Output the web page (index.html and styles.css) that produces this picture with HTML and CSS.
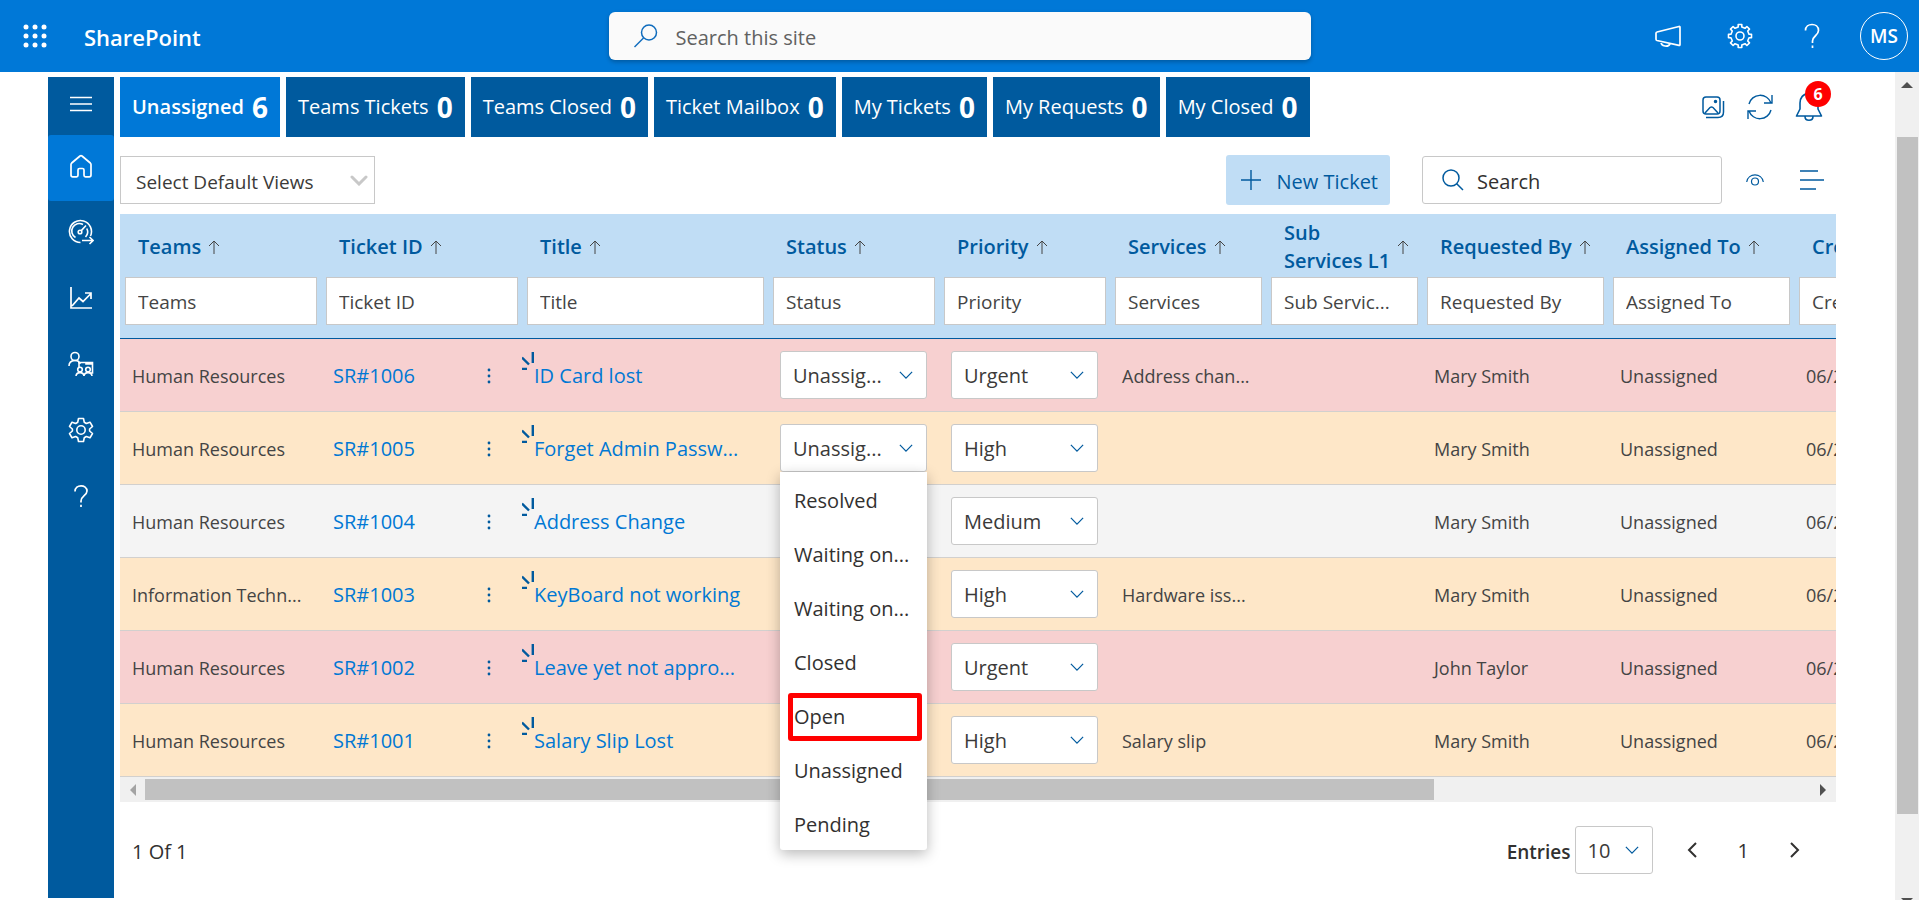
FILE: index.html
```
<!DOCTYPE html>
<html lang="en">
<head>
<meta charset="utf-8">
<title>SharePoint - Tickets</title>
<link rel="stylesheet" href="styles.css">
</head>
<body>
<svg class="defs" width="0" height="0" aria-hidden="true">
  <symbol id="i-up" viewBox="0 0 12 14"><path d="M6 14V1M1 6l5-5 5 5" fill="none" stroke="currentColor"/></symbol>
  <symbol id="i-down" viewBox="0 0 16 9"><path d="M1 1l7 7 7-7" fill="none" stroke="currentColor" stroke-width="1.4"/></symbol>
  <symbol id="i-dots" viewBox="0 0 4 16"><circle cx="2" cy="2" r="1.4"/><circle cx="2" cy="8" r="1.4"/><circle cx="2" cy="14" r="1.4"/></symbol>
  <symbol id="i-new" viewBox="0 0 12 18"><path d="M10.800 0V11M0 5.500L7 12.500M0 17h5" fill="none" stroke="currentColor" stroke-width="2.400"/></symbol>
  <symbol id="i-search" viewBox="0 0 24 24"><circle cx="10" cy="10" r="8" fill="none" stroke="currentColor" stroke-width="1.5"/><path d="M15.700 15.700L22 22" stroke="currentColor" stroke-width="1.500"/></symbol>
</svg>

<header class="suite">
  <button class="suite-btn waffle" aria-label="App launcher">
    <svg width="24" height="24" viewBox="0 0 24 24" fill="currentColor"><circle cx="3" cy="3" r="2.500"/><circle cx="12" cy="3" r="2.500"/><circle cx="21" cy="3" r="2.500"/><circle cx="3" cy="12" r="2.500"/><circle cx="12" cy="12" r="2.500"/><circle cx="21" cy="12" r="2.500"/><circle cx="3" cy="21" r="2.500"/><circle cx="12" cy="21" r="2.500"/><circle cx="21" cy="21" r="2.500"/></svg>
  </button>
  <a class="brand" href="#">SharePoint</a>
  <label class="suite-search">
    <svg width="26" height="26" viewBox="0 0 26 26" fill="none" stroke="currentColor" stroke-width="1.500"><circle cx="16" cy="9.500" r="7.500"/><path d="M10.500 15L1.500 24"/></svg>
    <input type="text" placeholder="Search this site" aria-label="Search this site">
  </label>
  <div class="suite-actions">
    <button class="suite-btn" aria-label="Announcements"><svg width="28" height="24" viewBox="0 0 28 24" fill="none" stroke="currentColor" stroke-width="1.700" stroke-linejoin="round"><path d="M3 8L25 2.500Q26 2.300 26 3.500V20.500Q26 21.700 25 21.400L3 16.500Q2 16.200 2 15.200V9.200Q2 8.200 3 8ZM7 17.800c0 5 7.500 5.500 9 2"/></svg></button>
    <button class="suite-btn" aria-label="Settings"><svg width="26" height="26" viewBox="0 0 26 26" fill="none" stroke="currentColor" stroke-width="1.600" stroke-linejoin="round"><circle cx="13" cy="13" r="4"/><path d="M11.200 4V1.500H14.800V4L18 5.300L19.900 3.500L22.500 6.100L20.700 8L22 11.200H24.500V14.800H22L20.700 18L22.500 19.900L19.900 22.500L18 20.700L14.800 22V24.500H11.200V22L8 20.700L6.100 22.500L3.500 19.900L5.300 18L4 14.800H1.500V11.200H4L5.300 8L3.500 6.100L6.100 3.500L8 5.300Z"/></svg></button>
    <button class="suite-btn" aria-label="Help"><svg width="18" height="26" viewBox="0 0 18 26" fill="none" stroke="currentColor" stroke-width="1.700"><path d="M2.500 7.500C2.500 -0.500 15.500 -0.500 15.500 7.500C15.500 12.500 9.500 13 9.500 18V20M9.500 22.500V25"/></svg></button>
    <button class="avatar">MS</button>
  </div>
</header>

<div class="shell">
  <div class="app">
    <nav class="side" aria-label="Main">
      <button class="side-item side-menu" aria-label="Menu"><svg width="22" height="16" viewBox="0 0 22 16" stroke="currentColor" stroke-width="1.500"><path d="M0 1.500H22M0 8H22M0 14.500H22"/></svg></button>
      <a class="side-item active" href="#" aria-label="Home"><svg width="24" height="24" viewBox="0 0 24 24" fill="none" stroke="currentColor" stroke-width="1.700" stroke-linejoin="round"><path d="M2 10.500Q2 9.700 2.700 9L11 2Q12 1.200 13 2L21.300 9Q22 9.700 22 10.500V21Q22 22.800 20.200 22.800H16.500Q15 22.800 15 21.300V16Q15 14.500 13.500 14.500H10.500Q9 14.500 9 16V21.300Q9 22.800 7.500 22.800H3.800Q2 22.800 2 21Z"/></svg></a>
      <a class="side-item" href="#" aria-label="Dashboard"><svg width="26" height="26" viewBox="0 0 26 26" fill="none" stroke="currentColor" stroke-width="1.600"><path d="M12.500 23.500A11 11 0 1 1 22.500 17"/><path d="M7.500 18.500A7.500 7.500 0 0 1 15 5.500M18.800 9.500A7.500 7.500 0 0 1 17.500 18"/><circle cx="12" cy="13" r="1.800"/><path d="M13.300 11.600L18 6.500M14 21.500H25M21.500 18L25 21.500L21.500 25"/></svg></a>
      <a class="side-item" href="#" aria-label="Reports"><svg width="24" height="24" viewBox="0 0 24 24" fill="none" stroke="currentColor" stroke-width="1.700"><path d="M2 1V22H23M3 20L10 12L14 15.500L22 7.500M16 7H22V13"/></svg></a>
      <a class="side-item" href="#" aria-label="Teams"><svg width="26" height="26" viewBox="0 0 26 26" fill="none" stroke="currentColor" stroke-width="1.600"><circle cx="7" cy="5.500" r="4"/><path d="M1 15C1 8 12 8 12 13M10 11.500H24.500V22H22M11 11.500V16M18 11.500V13H24M18 8.500"/><circle cx="12" cy="18.500" r="2.300"/><circle cx="20" cy="18.500" r="2.300"/><path d="M8 25C8.500 20.500 15.500 20.500 16 25C16.500 20.500 23.500 20.500 24 25"/></svg></a>
      <a class="side-item" href="#" aria-label="Settings"><svg width="26" height="26" viewBox="0 0 26 26" fill="none" stroke="currentColor" stroke-width="1.600" stroke-linejoin="round"><circle cx="13" cy="13" r="4.200"/><path d="M10.500 1.500H15.500L16.300 5.300L18.300 6.500L22 5.200L24.500 9.500L21.600 12V14L24.500 16.500L22 20.800L18.300 19.500L16.300 20.700L15.500 24.500H10.500L9.700 20.700L7.700 19.500L4 20.800L1.500 16.500L4.400 14V12L1.500 9.500L4 5.200L7.700 6.500L9.700 5.300Z"/></svg></a>
      <a class="side-item" href="#" aria-label="Help"><svg width="16" height="24" viewBox="0 0 16 24" fill="none" stroke="currentColor" stroke-width="1.700"><path d="M2 7.500C2 0 14 0 14 7C14 11.500 8 12 8 17V18.500M8 20.800V23"/></svg></a>
    </nav>

    <main class="main">
      <div class="top">
        <div class="tabs">
          <button class="tab current">Unassigned <b>6</b></button>
          <button class="tab">Teams Tickets <b>0</b></button>
          <button class="tab">Teams Closed <b>0</b></button>
          <button class="tab">Ticket Mailbox <b>0</b></button>
          <button class="tab">My Tickets <b>0</b></button>
          <button class="tab">My Requests <b>0</b></button>
          <button class="tab">My Closed <b>0</b></button>
        </div>
        <div class="top-icons">
          <button class="icon-btn" aria-label="Gallery"><svg width="24" height="24" viewBox="0 0 24 24" fill="none" stroke="currentColor" stroke-width="1.500"><rect x="2" y="2" width="17" height="17" rx="3"/><path d="M5 22.500H17Q22.500 22.500 22.500 17V6M4 18L9 12.500Q10.500 11.500 12 12.500L17 18"/><circle cx="14.500" cy="6.500" r="1" fill="currentColor"/></svg></button>
          <button class="icon-btn" aria-label="Refresh"><svg width="26" height="26" viewBox="0 0 26 26" fill="none" stroke="currentColor" stroke-width="1.400"><path d="M2 10A11.500 11.500 0 0 1 24 9M25 1V9H17M24 16A11.500 11.500 0 0 1 2 17M1 25V17H9"/></svg></button>
          <button class="icon-btn bell" aria-label="Notifications"><svg width="28" height="30" viewBox="0 0 28 30" fill="none" stroke="currentColor" stroke-width="1.600" stroke-linejoin="round"><path d="M14 1.500C8 1.500 5 6 5 11V17L1.500 24H26.500L23 17V11C23 6 20 1.500 14 1.500ZM10 24.500C10 29.500 18 29.500 18 24.500"/></svg><span class="badge">6</span></button>
        </div>
      </div>

      <div class="toolbar">
        <div class="select views">
          <select aria-label="Default views"><option>Select Default Views</option></select>
          <svg width="18" height="11" viewBox="0 0 18 11"><path d="M2 2l7 7 7-7" fill="none" stroke="currentColor" stroke-width="3" stroke-linecap="round"/></svg>
        </div>
        <div class="tools">
          <button class="new-ticket"><svg width="20" height="20" viewBox="0 0 20 20"><path d="M10 0V20M0 10H20" stroke="currentColor" stroke-width="1.400"/></svg><span>New Ticket</span></button>
          <label class="search"><svg width="24" height="24"><use href="#i-search"/></svg><input type="text" placeholder="Search" aria-label="Search"></label>
          <button class="icon-btn eye" aria-label="Show columns"><svg width="18" height="12" viewBox="0 0 18 12" fill="none" stroke="currentColor" stroke-width="1.200"><path d="M0.700 8C2 -1.500 16 -1.500 17.300 8"/><circle cx="9" cy="7.500" r="3.500"/></svg></button>
          <button class="icon-btn lines" aria-label="Group"><svg width="24" height="20" viewBox="0 0 24 20" stroke="currentColor" stroke-width="1.600"><path d="M0 1H18M0 10H24M0 19H16"/></svg></button>
        </div>
      </div>

      <div class="grid">
        <div class="grid-view">
          <table class="tickets">
            <colgroup><col class="c-team"><col class="c-team"><col class="c-title"><col class="c-pick"><col class="c-pick"><col class="c-serv"><col class="c-serv"><col class="c-who"><col class="c-who"><col class="c-who"></colgroup>
            <thead>
              <tr>
                <th><div class="head">Teams <svg width="12" height="14"><use href="#i-up"/></svg></div><input type="text" placeholder="Teams" aria-label="Filter Teams"></th>
                <th><div class="head">Ticket ID <svg width="12" height="14"><use href="#i-up"/></svg></div><input type="text" placeholder="Ticket ID" aria-label="Filter Ticket ID"></th>
                <th><div class="head">Title <svg width="12" height="14"><use href="#i-up"/></svg></div><input type="text" placeholder="Title" aria-label="Filter Title"></th>
                <th><div class="head">Status <svg width="12" height="14"><use href="#i-up"/></svg></div><input type="text" placeholder="Status" aria-label="Filter Status"></th>
                <th><div class="head">Priority <svg width="12" height="14"><use href="#i-up"/></svg></div><input type="text" placeholder="Priority" aria-label="Filter Priority"></th>
                <th><div class="head">Services <svg width="12" height="14"><use href="#i-up"/></svg></div><input type="text" placeholder="Services" aria-label="Filter Services"></th>
                <th><div class="head"><span>Sub<br>Services L1</span> <svg width="12" height="14"><use href="#i-up"/></svg></div><input type="text" placeholder="Sub Servic..." aria-label="Filter Sub Services L1"></th>
                <th><div class="head">Requested By <svg width="12" height="14"><use href="#i-up"/></svg></div><input type="text" placeholder="Requested By" aria-label="Filter Requested By"></th>
                <th><div class="head">Assigned To <svg width="12" height="14"><use href="#i-up"/></svg></div><input type="text" placeholder="Assigned To" aria-label="Filter Assigned To"></th>
                <th><div class="head">Created <svg width="12" height="14"><use href="#i-up"/></svg></div><input type="text" placeholder="Created" aria-label="Filter Created"></th>
              </tr>
            </thead>
            <tbody id="rows"></tbody>
          </table>
        </div>
        <div class="hbar"><i class="arrow left"></i><div class="hbar-track"><div class="hbar-thumb"></div></div><i class="arrow right"></i></div>
        <div class="menu" role="listbox" aria-label="Status">
          <button role="option">Resolved</button>
          <button role="option">Waiting on...</button>
          <button role="option">Waiting on...</button>
          <button role="option">Closed</button>
          <button role="option" class="marked">Open</button>
          <button role="option">Unassigned</button>
          <button role="option">Pending</button>
        </div>
      </div>

      <footer class="pager">
        <span class="page-count">1 Of 1</span>
        <div class="pager-right">
          <label for="entries">Entries</label>
          <div class="select entries"><select id="entries"><option>10</option></select><svg width="14" height="8"><use href="#i-down"/></svg></div>
          <button class="page-btn" aria-label="Previous page"><svg width="10" height="16" viewBox="0 0 10 16" fill="none" stroke="currentColor" stroke-width="2"><path d="M9 1L2 8L9 15"/></svg></button>
          <span class="page-num">1</span>
          <button class="page-btn" aria-label="Next page"><svg width="10" height="16" viewBox="0 0 10 16" fill="none" stroke="currentColor" stroke-width="2"><path d="M1 1L8 8L1 15"/></svg></button>
        </div>
      </footer>
    </main>
  </div>
  <div class="vbar"><i class="arrow up"></i><div class="vbar-track"><div class="vbar-thumb"></div></div><i class="arrow down"></i></div>
</div>
<script src="rows.js"></script>
</body>
</html>
```

FILE: styles.css
```
* { box-sizing: border-box; }
body {
  margin: 0;
  height: 100vh;
  overflow: hidden;
  display: flex;
  flex-direction: column;
  background: #fff;
  color: #323130;
  font: 20px/28px "Open Sans", "Noto Sans", sans-serif;
}
button, input, select { font: inherit; color: inherit; margin: 0; }
button { border: 0; background: none; padding: 0; cursor: pointer; }
a { text-decoration: none; color: inherit; }
svg { display: block; flex: none; }
.defs { position: absolute; }

.suite {
  flex: none;
  position: relative;
  height: 72px;
  background: #0078d7;
  color: #fff;
  display: flex;
  align-items: center;
  padding-right: 11px;
}
.suite-btn { width: 72px; height: 72px; display: grid; place-items: center; }
.waffle { width: 70px; }
.brand { padding: 2px 0 0 14px; font-size: 22px; font-weight: 600; }
.suite-search {
  position: absolute;
  left: 50%;
  transform: translateX(-50%);
  width: 702px;
  height: 48px;
  display: flex;
  align-items: center;
  gap: 17px;
  padding: 0 24px;
  border-radius: 6px;
  background: #fafafa;
  color: #0f6cbd;
  box-shadow: 0 2px 4px rgba(0, 0, 0, .25);
}
.suite-search input { flex: 1; border: 0; background: none; outline: 0; padding: 3px 0 0; }
.suite-search input::placeholder { color: #616161; opacity: 1; }
.suite-actions { margin-left: auto; display: flex; align-items: center; }
.avatar { width: 48px; height: 48px; margin-left: 12px; border: 1px solid #fff; border-radius: 50%; font-size: 19px; font-weight: 600; color: #fff; }

.shell { flex: 1; min-height: 0; display: flex; }
.app { flex: 1; min-width: 0; display: flex; padding: 5px 59px 2px 48px; }
.side { width: 66px; flex: none; background: #005a9e; color: #fff; }
.side-item { width: 66px; height: 66px; display: grid; place-items: center; padding-bottom: 5px; }
.side-menu { height: 58px; padding-bottom: 4px; }
.side-item.active { background: #0078d7; border-radius: 3px; }

.main { flex: 1; min-width: 0; padding-left: 6px; }
.top { display: flex; justify-content: space-between; height: 60px; }
.tabs { display: flex; gap: 6px; }
.tab {
  display: flex;
  align-items: center;
  justify-content: center;
  gap: 8px;
  padding: 0 12px;
  background: #005a9e;
  color: #fff;
  white-space: nowrap;
}
.tab b { font-size: 28px; font-weight: 700; }
.tab.current { background: #0078d7; font-weight: 600; }
.top-icons { display: flex; align-items: center; gap: 22px; padding-right: 13px; color: #005a9e; }
.icon-btn { position: relative; color: #005a9e; }
.badge {
  position: absolute;
  top: -11px;
  right: -8px;
  width: 26px;
  height: 26px;
  border-radius: 50%;
  background: #f00;
  color: #fff;
  font-size: 16px;
  line-height: 26px;
  font-weight: 700;
  text-align: center;
}

.toolbar { display: flex; align-items: center; justify-content: space-between; height: 77px; padding-top: 9px; }
.select { position: relative; display: flex; align-items: center; }
.select select {
  appearance: none;
  width: 100%;
  height: 48px;
  padding: 1px 12px 0;
  border: 1px solid #c8c8c8;
  border-radius: 3px;
  background: #fff;
  color: #3b3a39;
}
.select svg { position: absolute; right: 14px; color: #005a9e; pointer-events: none; }
.views { width: 255px; font-size: 19px; }
.views select { border-radius: 0; padding: 3px 15px 0; }
.views svg { right: 7px; color: #c8c8c8; }
.tools { display: flex; align-items: center; padding-right: 12px; }
.new-ticket { display: flex; align-items: center; gap: 16px; height: 50px; padding: 0 12px 0 15px; margin-right: 32px; border-radius: 3px; background: #c0ddf5; color: #005a9e; }
.new-ticket span { padding-top: 3px; }
.search { display: flex; align-items: center; gap: 12px; width: 300px; height: 48px; padding: 0 18px; border: 1px solid #c8c8c8; border-radius: 3px; color: #005a9e; }
.search input { width: 100%; min-width: 0; border: 0; outline: 0; padding: 3px 0 0; }
.search input::placeholder { color: #323130; opacity: 1; }
.eye { margin: 0 36px 0 24px; }

.grid { position: relative; }
.grid-view { overflow: hidden; }
.tickets { table-layout: fixed; width: 1860px; border-collapse: separate; border-spacing: 0; }
.c-team { width: 201px; }
.c-title { width: 246px; }
.c-pick { width: 171px; }
.c-serv { width: 156px; }
.c-who { width: 186px; }
th { padding: 5px 4px 13px 5px; background: #c0ddf5; border-bottom: 1px solid #005a9e; text-align: left; vertical-align: top; }
.head { display: flex; align-items: center; gap: 7px; height: 56px; margin-bottom: 2px; padding-left: 13px; color: #005a9e; font-weight: 600; white-space: nowrap; }
.head svg { color: #444; }
th input { display: block; width: 100%; height: 48px; padding: 2px 12px 0; border: 1px solid #c8c8c8; background: #fff; font-size: 19px; font-weight: 400; }
th input::placeholder { color: #444; opacity: 1; }
td { height: 73px; padding: 2px 12px 0; border-bottom: 1px solid #d2d0ce; color: #444; font-size: 18px; white-space: nowrap; }
td a { color: #0078d4; font-size: 20px; }
.urgent td { background: #f7d0d0; }
.high td { background: #fee7c8; }
.medium td { background: #f4f4f4; }
.ticket-id { display: flex; justify-content: space-between; align-items: center; padding-right: 19px; }
.ticket-id button { color: #005a9e; fill: currentColor; }
td.title { padding: 2px 0 0; }
.title-line { display: flex; align-items: flex-start; height: 48px; color: #005a9e; }
.title-line a { padding-top: 10px; }
td.pick { padding-top: 0; font-size: 20px; }

.hbar { display: flex; align-items: center; height: 25px; padding: 0 10px; background: #f0f0f0; gap: 9px; }
.hbar-track { flex: 1; }
.hbar-thumb { width: 77.4%; height: 21px; background: #c1c1c1; }
.arrow { flex: none; border: 6px solid transparent; }
.arrow.left { border-right-color: #a3a3a3; border-left-width: 0; }
.arrow.right { border-left-color: #505050; border-right-width: 0; }

.menu {
  position: absolute;
  left: 660px;
  top: 258px;
  width: 147px;
  border-radius: 0 0 3px 3px;
  background: #fff;
  box-shadow: 0 4px 14px rgba(0, 0, 0, .28);
}
.menu button { position: relative; display: block; width: 100%; height: 54px; padding: 3px 0 0 14px; text-align: left; white-space: nowrap; }
.marked::after { content: ""; position: absolute; inset: 5px 5px 1px 8px; border: 5px solid #f00; border-radius: 3px; }

.pager { display: flex; align-items: center; justify-content: space-between; padding: 24px 12px 0; }
.page-count { padding-top: 3px; }
.pager-right { display: flex; align-items: center; padding-right: 24px; }
.pager-right label { font-size: 19px; font-weight: 600; padding: 3px 4px 0 0; }
.entries { width: 78px; margin-right: 34px; }
.page-num { padding: 2px 41px 0; }

.vbar { flex: none; width: 24px; background: #f0f0f0; display: flex; flex-direction: column; align-items: center; padding-top: 10px; }
.vbar-track { flex: 1; width: 21px; padding-top: 49px; }
.vbar-thumb { height: 89%; background: #c1c1c1; }
.arrow.up { border-bottom-color: #505050; border-top-width: 0; }
.arrow.down { border-top-color: #505050; border-bottom-width: 0; margin-bottom: -4px; }
```

FILE: rows.js
```
var tickets = [
  ["urgent", "Human Resources", "SR#1006", "ID Card lost", "Urgent", "Address chan...", "Mary Smith"],
  ["high", "Human Resources", "SR#1005", "Forget Admin Passw...", "High", "", "Mary Smith"],
  ["medium", "Human Resources", "SR#1004", "Address Change", "Medium", "", "Mary Smith"],
  ["high", "Information Techn...", "SR#1003", "KeyBoard not working", "High", "Hardware iss...", "Mary Smith"],
  ["urgent", "Human Resources", "SR#1002", "Leave yet not appro...", "Urgent", "", "John Taylor"],
  ["high", "Human Resources", "SR#1001", "Salary Slip Lost", "High", "Salary slip", "Mary Smith"]
];

function pick(label, value) {
  return '<div class="select"><select aria-label="' + label + '"><option>' + value +
    '</option></select><svg width="14" height="8"><use href="#i-down"/></svg></div>';
}

document.getElementById("rows").innerHTML = tickets.map(function (t) {
  return '<tr class="' + t[0] + '"><td>' + t[1] + '</td>' +
    '<td><div class="ticket-id"><a href="#">' + t[2] + '</a><button aria-label="Actions"><svg width="4" height="16"><use href="#i-dots"/></svg></button></div></td>' +
    '<td class="title"><div class="title-line"><svg width="12" height="18"><use href="#i-new"/></svg><a href="#">' + t[3] + '</a></div></td>' +
    '<td class="pick">' + pick("Status", "Unassig...") + '</td>' +
    '<td class="pick">' + pick("Priority", t[4]) + '</td>' +
    '<td>' + t[5] + '</td><td></td><td>' + t[6] + '</td><td>Unassigned</td><td>06/24/2022</td></tr>';
}).join("");
```
